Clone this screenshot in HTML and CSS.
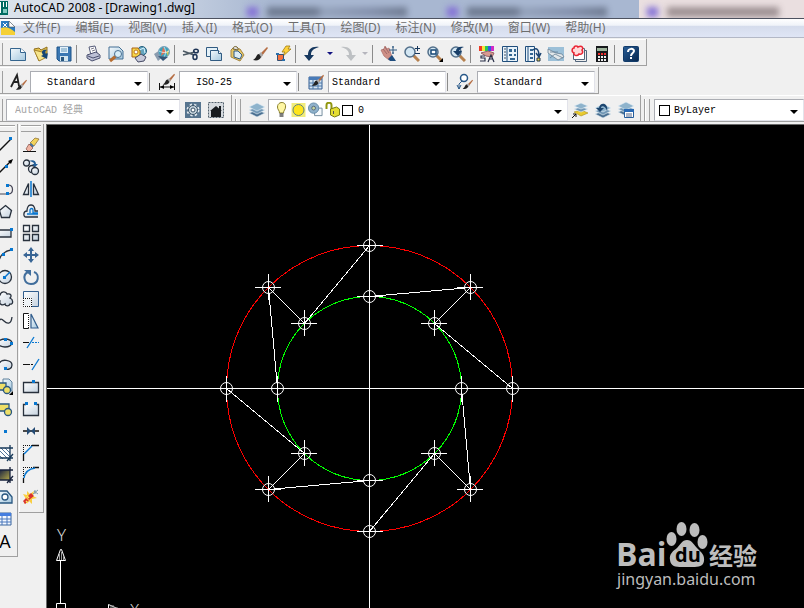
FILE: index.html
```html
<!DOCTYPE html>
<html lang="zh-CN">
<head>
<meta charset="utf-8">
<title>AutoCAD 2008 - [Drawing1.dwg]</title>
<link rel="stylesheet" href="styles.css">
</head>
<body>
<svg class="defs" aria-hidden="true">
  <defs>
    <linearGradient id="blue" x1="0" y1="0" x2="1" y2="1"><stop offset="0" stop-color="#f4f9fc"/><stop offset="1" stop-color="#a5c8df"/></linearGradient>
    <linearGradient id="pale" x1="0" y1="0" x2="1" y2="1"><stop offset="0" stop-color="#fff"/><stop offset="1" stop-color="#c5d2df"/></linearGradient>
    <linearGradient id="navy" x1="0" y1="0" x2="1" y2="1"><stop offset="0" stop-color="#285d96"/><stop offset="1" stop-color="#06264e"/></linearGradient>
    <linearGradient id="olive" x1="0" y1="0" x2="1" y2="1"><stop offset="0" stop-color="#17203f"/><stop offset="1" stop-color="#b5aa49"/></linearGradient>
    <symbol id="brush" viewBox="0 0 16 16"><path d="M15 1L8 8l2 2 6-8z" fill="#b56d43"/><path d="M9 6L6 9l3 3 2-3z" fill="#aaa"/><path d="M7 8c-3 0-2 4-6 6 4 1 7 0 8-3z" fill="#222"/></symbol>
    <symbol id="layers" viewBox="0 0 16 16"><g stroke="#e9f2f8" stroke-width=".6"><path d="M0 11l8-3 8 3-8 4z" fill="#496f91"/><path d="M0 8l8-3 8 3-8 4z" fill="#7197b5"/><path d="M0 5l8-4 8 4-8 4z" fill="#8eb3cc"/></g></symbol>
    <symbol id="lens" viewBox="0 0 16 16"><path d="M9 9l6 6" stroke="#b6814f" stroke-width="3"/><circle cx="6" cy="6" r="5" fill="#d4e7f3" stroke="#526f8a" stroke-width="1.5"/></symbol>
  </defs>
</svg>

<div class="app">
  <header class="titlebar">
    <svg class="app-icon" viewBox="0 0 9 16"><path d="M0 0h8v14H0z" fill="#006b62"/><path d="M0 1h1v11H0zM3 1h1v5H3zM6 1h1v5H6z" fill="#fff"/><path d="M3 8h4v4H3z" fill="#80c9c0"/></svg>
    <h1>AutoCAD 2008 - [Drawing1.dwg]</h1>
    <div class="backdrop" aria-hidden="true">
      <i class="tab"></i><i class="tab"></i><i class="tab front"></i>
    </div>
  </header>

  <nav class="menubar">
    <svg class="doc-icon" viewBox="0 0 16 16"><path d="M1 1h8l6 6v8H1z" fill="#2b7bc1"/><path d="M9 1v6h6z" fill="#fff" stroke="#555" stroke-width=".6"/><path d="M1 8c5-2 9 0 14 4v3H1z" fill="#f5d038"/><path d="M3 3l4 4M7 3L3 7" stroke="#fff"/></svg>
    <a href="#">文件(F)</a><a href="#">编辑(E)</a><a href="#">视图(V)</a><a href="#">插入(I)</a><a href="#">格式(O)</a><a href="#">工具(T)</a><a href="#">绘图(D)</a><a href="#">标注(N)</a><a href="#">修改(M)</a><a href="#">窗口(W)</a><a href="#">帮助(H)</a>
  </nav>

  <div class="row">
    <div class="toolbar standard">
      <button aria-label="新建"><svg viewBox="0 0 16 16"><path d="M.5 2.500h10l5 4v8H.5z" fill="url(#blue)" stroke="#35658e"/><path d="M10.500 2.500v4h5" fill="#fff" stroke="#35658e"/></svg></button>
      <button aria-label="打开"><svg viewBox="0 0 16 16"><path d="M1 3l5-1 2 2 6-3v6L6 15z" fill="#e7c34b" stroke="#907021"/><path d="M1 4l5 11 8-4-5-5z" fill="#f7e58b" stroke="#a4822e"/><path d="M14 4c-5-1-6 2-4 5l-2 1 6 3 1-6-2 1c-1-2-1-3 1-4z" fill="#154675"/></svg></button>
      <button aria-label="保存"><svg viewBox="0 0 16 16"><path d="M1 1h14v14H3l-2-2z" fill="#3b78b3" stroke="#1d5288"/><path d="M4 1h8v6H4z" fill="#e3f1fa"/><path d="M5 3h6M5 5h6" stroke="#6899bb"/><path d="M4 10h8v5H4z" fill="#d4e6ef"/><path d="M5 11h3v4H5z" fill="#28567f"/></svg></button>
      <span class="sep"></span>
      <button aria-label="打印"><svg viewBox="0 0 16 16"><path d="M4 1l6-1 2 7-6 2z" fill="#fff" stroke="#555b79"/><path d="M6 3l3-1M7 5l3-1" stroke="#778"/><path d="M2 9l9-3 4 3v3l-8 3-5-3z" fill="#bcc0d6" stroke="#4b506f"/><path d="M3 10l5 2 6-2" fill="none" stroke="#4b506f"/></svg></button>
      <button aria-label="打印预览"><svg viewBox="0 0 16 16"><path d="M1 1h10l4 4v8H1z" fill="url(#blue)" stroke="#426f94"/><path d="M8 10l-6 5" stroke="#b66d30" stroke-width="3"/><circle cx="10" cy="8" r="3.500" fill="#d7edf8" stroke="#4a6f8f"/></svg></button>
      <button aria-label="发布"><svg viewBox="0 0 16 16"><circle cx="11" cy="5" r="4.500" fill="#63a4be" stroke="#225d7c"/><path d="M8 4l5-2 1 5" fill="none" stroke="#d9f4ff"/><path d="M1 2h6l2 3v6H1z" fill="#f8d748" stroke="#aa6414"/><circle cx="5" cy="6" r="2" fill="#fff" stroke="#bd761e"/><path d="M4 12l6-4 5 3-2 4-6 1z" fill="#c7c9d9" stroke="#464b65"/></svg></button>
      <button aria-label="三维DWF"><svg viewBox="0 0 16 16"><path d="M0 8l6-4 5 5-7 6z" fill="#8a9bae"/><circle cx="10" cy="6" r="5.500" fill="#3ba1bb" stroke="#7ba3bd"/><path d="M9 1l3 5-5 4z" fill="#e37053"/><path d="M12 6l3-2-1 6z" fill="#d9c74d"/><path d="M10 1c2 3 2 7 0 10M5 5c4 2 7 2 10 0" fill="none" stroke="#e7f4f8" stroke-width=".8"/><path d="M4 10l5 5 5-4z" fill="#345578"/></svg></button>
      <span class="sep"></span>
      <button aria-label="剪切"><svg viewBox="0 0 16 16"><path d="M0 5l11 4M0 9l12-3" stroke="#4c5964" stroke-width="1.500"/><ellipse cx="13" cy="5" rx="2.300" ry="1.800" fill="none" stroke="#1e3455" stroke-width="1.500"/><ellipse cx="12" cy="11" rx="2" ry="2.500" fill="none" stroke="#1e3455" stroke-width="1.500"/></svg></button>
      <button aria-label="复制"><svg viewBox="0 0 16 16"><path d="M.5 1.500h11v9H.5z" fill="#e4f1f8" stroke="#315b82"/><path d="M4.500 4.500h8l3 3v7h-11z" fill="url(#blue)" stroke="#315b82"/><path d="M12.500 4.500v3h3" fill="#fff" stroke="#315b82"/></svg></button>
      <button aria-label="粘贴"><svg viewBox="0 0 16 16"><path d="M4 2l7 1 4 6-4 6-9-4V4z" fill="#e7c766" stroke="#a58540"/><path d="M4 3c0-4 6-3 5 1z" fill="#ddd" stroke="#76642f"/><path d="M5 5h4l4 4-2 4-6-2z" fill="#dcecf5" stroke="#315b82"/></svg></button>
      <button aria-label="特性匹配"><svg><use href="#brush"/></svg></button>
      <button aria-label="块编辑器"><svg viewBox="0 0 16 16"><path d="M11 0L7 6h3l-3 5 9-8h-3l2-3z" fill="#ffd33b" stroke="#a07c12" stroke-width=".8"/><path d="M2.500 8.500h6v6h-6z" fill="#f4713d" stroke="#334e72"/><path d="M1 7h3v2H1zM7 13h3v2H7z" fill="#286fab"/></svg></button>
      <span class="sep"></span>
      <button aria-label="放弃"><svg viewBox="0 0 16 16"><path d="M15 1C8 0 4 3 4 9H0l5 6 5-6H7c0-4 2-6 8-8z" fill="#16385f"/></svg></button>
      <button class="more" aria-label="放弃列表"><svg viewBox="0 0 6 4"><path d="M0 0h6L3 3z" fill="#111180"/></svg></button>
      <button aria-label="重做"><svg viewBox="0 0 16 16"><path d="M1 1c7-1 11 2 11 8h4l-5 6-5-6h3c0-4-2-6-8-8z" fill="#bdc0c3"/></svg></button>
      <button class="more redo" aria-label="重做列表"><svg viewBox="0 0 6 4"><path d="M0 0h6L3 3z" fill="#b5b5bd"/></svg></button>
      <span class="sep"></span>
      <button aria-label="实时平移"><svg viewBox="0 0 16 16"><path d="M0 4l3-1 1-3 2 3 2-1 3 9-3 3-5-4z" fill="#ce8f86" stroke="#b07570" stroke-width=".8"/><path d="M2 3l4 5M4 1l4 6" stroke="#7f4f52" stroke-width=".6"/><path d="M7 13l4-4 4 6H9z" fill="#1f4d7e"/><path d="M12 0v8M8 4h8M11 1h2M11 7h2" stroke="#315b82"/></svg></button>
      <button aria-label="实时缩放"><svg viewBox="0 0 16 16"><use href="#lens"/><path d="M13.500 0v5M11 2.500h5M11 7.500h5" stroke="#16365b"/></svg></button>
      <button aria-label="窗口缩放"><svg viewBox="0 0 16 16"><use href="#lens"/><path d="M4 4h5v4H4z" fill="#fff" stroke="#174876" stroke-width="1.500"/><path d="M16 12v4h-4z"/></svg></button>
      <button aria-label="缩放上一个"><svg viewBox="0 0 16 16"><use href="#lens"/><path d="M14 1C9 0 6 2 6 5H3l5 5 4-5H9c1-2 2-3 5-4z" fill="#173e69"/></svg></button>
      <span class="sep"></span>
      <button aria-label="特性"><svg viewBox="0 0 16 16"><path d="M0 0h3v5H0z" fill="#ed3a24"/><path d="M3 0h3v5H3z" fill="#f3e639"/><path d="M6 0h3v5H6z" fill="#27ca54"/><path d="M9 0h3v5H9z" fill="#315be0"/><path d="M12 0h3v5h-3z" fill="#d12ac7"/><path d="M2 7l7-2 6 2-2 4-6-1z" fill="#d89b91" stroke="#976265"/><path d="M6 10H2v2h4v3H1M9 16l3-7 3 7M10 13h4" fill="none" stroke="#292f48" stroke-width="1.200"/></svg></button>
      <button aria-label="设计中心"><svg viewBox="0 0 16 16"><path d="M.5.500h15v15H.5z" fill="#e9f3fa" stroke="#204e7c"/><path d="M5 1v14" stroke="#204e7c"/><path d="M2 3h2M2 6h2M2 9h2M2 12h2" stroke="#456"/><path d="M7 3h3v3H7zM12 3h2v3h-2zM7 8h3v2H7zM12 8h2v2h-2zM8 12h5v2H8z" fill="#346792"/></svg></button>
      <button aria-label="工具选项板"><svg viewBox="0 0 16 16"><path d="M.5.500h9v15h-9z" fill="#e9f3fa" stroke="#204e7c"/><path d="M3 1v14" stroke="#204e7c"/><path d="M5 3h3v2H5zM5 7h3v2H5zM5 11h3v2H5z" fill="#346792"/><path d="M8 4c4-3 6 0 6 6M11 7l3 4 2-4" fill="none" stroke="#1e4774" stroke-width="1.500"/><path d="M12 12h3v3h-3z" fill="#efd64e" stroke="#234"/></svg></button>
      <button aria-label="图纸集管理器"><svg viewBox="0 0 16 16"><path d="M0 1h16v14H0z" fill="#9cc0d8"/><path d="M0 3l8 4 6 1 2 3-6 3-10-7z" fill="#e3e8ea" stroke="#6a8295" stroke-width=".8"/><path d="M2 12l5-4 8 4M2 6h8" fill="none" stroke="#637f94" stroke-width=".8"/></svg></button>
      <button aria-label="标记集管理器"><svg viewBox="0 0 16 16"><path d="M4.500 4.500h11v11h-11z" fill="#eee" stroke="#53667c"/><path d="M2.500 2.500h11v11h-11z" fill="#fff" stroke="#53667c"/><path d="M3 2c0-3 4-2 4-1 4-2 6 1 4 3 2 3-1 5-3 4-2 3-6 1-5-1-3-1-2-5 0-5z" fill="#ffd9d9" stroke="#ea2534" stroke-width="1.500"/></svg></button>
      <button aria-label="快速计算器"><svg viewBox="0 0 16 16"><path d="M2 0h12v16H2z" fill="#17191c"/><path d="M3 2h10v3H3z" fill="#9db49c"/><path d="M4 7h2v2H4zM7 7h2v2H7zM10 7h2v2h-2z" fill="#ef3030"/><path d="M4 10h2v2H4zM7 10h2v2H7zM10 10h2v2h-2zM4 13h2v2H4zM7 13h2v2H7zM10 13h2v2h-2z" fill="#eee"/></svg></button>
      <span class="sep"></span>
      <button aria-label="帮助"><svg viewBox="0 0 16 16"><rect x=".5" y=".5" width="15" height="15" rx="1" fill="url(#navy)" stroke="#113b6a"/><path d="M5 6c0-4 6-4 6-1 0 2-3 2-3 5M8 11v2" fill="none" stroke="#fff" stroke-width="2"/></svg></button>
    </div>
  </div>

  <div class="row">
    <div class="toolbar styles">
      <button aria-label="文字样式"><svg viewBox="0 0 16 16"><path d="M1 13L7 1l2 11M3 8h6" fill="none" stroke="#222" stroke-width="1.800"/><use href="#brush" x="5" y="5" width="12" height="12"/></svg></button>
      <label class="combo style"><select aria-label="文字样式"><option>Standard</option></select></label>
      <span class="sep"></span>
      <button aria-label="标注样式"><svg viewBox="0 0 16 16"><use href="#brush" x="3" y="-1" width="13" height="13"/><path d="M.5 9v7M15.500 9v7M1 13h14" stroke="#111"/><path d="M1 13l4-2v4zM15 13l-4-2v4z"/></svg></button>
      <label class="combo style"><select aria-label="标注样式"><option>ISO-25</option></select></label>
      <span class="sep"></span>
      <button aria-label="表格样式"><svg viewBox="0 0 16 16"><path d="M1 3h13v12H1z" fill="#d3e3f1" stroke="#325d92"/><path d="M1 3h13v3H1z" fill="#497bb8"/><path d="M1 9h13M1 12h13M5 6v9M10 6v9" stroke="#4d79a9"/><use href="#brush" x="3" y="0" width="13" height="13"/></svg></button>
      <label class="combo style near"><select aria-label="表格样式"><option>Standard</option></select></label>
      <span class="sep"></span>
      <button aria-label="多重引线样式"><svg viewBox="0 0 16 16"><circle cx="7" cy="4" r="3.500" fill="#fff" stroke="#285888" stroke-width="1.500"/><path d="M5 7l-3 3v5M0 11l2 4 2-4" fill="none" stroke="#285888"/><use href="#brush" x="5" y="5" width="11" height="11"/></svg></button>
      <label class="combo style"><select aria-label="多重引线样式"><option>Standard</option></select></label>
    </div>
  </div>

  <div class="row">
    <div class="toolbar workspace">
      <label class="combo muted"><select aria-label="工作空间"><option>AutoCAD 经典</option></select></label>
      <button aria-label="工作空间设置"><svg viewBox="0 0 16 16"><path d="M0 0h16v16H0z" fill="#57758f"/><circle cx="8" cy="8" r="5" fill="#bccbd6" stroke="#e5ebef" stroke-width="3" stroke-dasharray="2 2"/><circle cx="8" cy="8" r="4.500" fill="#c4d2dc" stroke="#344e63"/><circle cx="8" cy="8" r="2" fill="#fff" stroke="#344e63"/></svg></button>
      <button aria-label="我的工作空间"><svg viewBox="0 0 16 16"><path d="M.5.500h15v15H.5z" fill="#d5dadf" stroke="#52606c" stroke-dasharray="2 1"/><path d="M2 9l6-5 6 5h-1v6H3V9z" fill="#171b1f"/><path d="M11 4h2v4h-2z" fill="#171b1f"/></svg></button>
    </div>
    <div class="toolbar layer-bar">
      <span class="grip"></span>
      <button aria-label="图层特性管理器"><svg><use href="#layers"/></svg></button>
      <label class="combo layer">
        <svg viewBox="0 0 12 16"><path d="M2 5c0-6 9-6 8 0 0 3-2 3-2 6H4c0-3-2-3-2-6z" fill="#fff7a4" stroke="#8a812c"/><path d="M4 12h4M4 14h4" stroke="#555" stroke-width="1.500"/></svg>
        <svg viewBox="0 0 14 16"><path d="M0 1h14v14H0z" fill="#f1ec7a"/><circle cx="7" cy="8" r="5.500" fill="#ffe51c" stroke="#5e8385"/></svg>
        <svg viewBox="0 0 16 16"><path d="M7 6h8v8H7z" fill="#f5f9fc" stroke="#718a9c"/><circle cx="6" cy="6" r="5.500" fill="#8fb1ca" stroke="#638ba9"/><circle cx="6" cy="6" r="2" fill="#c9d8a2" stroke="#567"/></svg>
        <svg viewBox="0 0 14 16"><path d="M1 7V3c0-3 5-3 5 0v5" fill="none" stroke="#919710" stroke-width="2"/><path d="M5 7l6-2 3 2v6l-5 2-4-2z" fill="#e4dd31" stroke="#777b13"/><path d="M8 9v3" stroke="#555"/></svg>
        <i class="swatch"></i>
        <select aria-label="图层"><option>0</option></select>
      </label>
      <button aria-label="置为当前图层"><svg viewBox="0 0 16 16"><path d="M2 10l7-2 7 3-7 3z" fill="#e9ca2d" stroke="#a88d1c" stroke-width=".6"/><path d="M2 7l7-2 7 2-7 3z" fill="#7197b5" stroke="#e9f2f8" stroke-width=".6"/><path d="M2 4l7-3 7 3-7 3z" fill="#8eb3cc" stroke="#e9f2f8" stroke-width=".6"/><path d="M0 16l4-4M1 12h3v3" fill="none" stroke="#111"/></svg></button>
      <button aria-label="上一个图层"><svg viewBox="0 0 16 16"><use href="#layers" y="1"/><path d="M12 9c2-8-7-10-8-3H1l4 4 4-4H6c0-3 5-2 6 3z" fill="#1c456f"/></svg></button>
      <button aria-label="图层状态管理器"><svg viewBox="0 0 16 16"><use href="#layers" y="-1"/><path d="M6.500 7.500h9v8h-9z" fill="#fff" stroke="#255d9c"/><path d="M6 7h10v3H6z" fill="#2869b4"/><path d="M8 12h6M8 14h6" stroke="#568"/></svg></button>
    </div>
    <div class="toolbar props-bar">
      <span class="grip"></span>
      <label class="combo color"><i class="swatch"></i><select aria-label="颜色控制"><option>ByLayer</option></select></label>
    </div>
  </div>

  <main class="work">
    <aside class="palette draw">
      <span class="grip flat"></span>
      <button aria-label="直线"><svg viewBox="0 0 16 16"><path d="M0 16L14 2" stroke="#111" stroke-width="1.300"/><path d="M12 0h3v3h-3z" class="node"/></svg></button>
      <button aria-label="构造线"><svg viewBox="0 0 16 16"><path d="M0 16L14 2" stroke="#111" stroke-width="1.300"/><path d="M16 0l-5 2 3 3z"/><path d="M8 6h3v3H8z" class="node"/></svg></button>
      <button aria-label="多段线"><svg viewBox="0 0 16 16"><path d="M1 13h9M11 4c6 0 6 9 0 9" fill="none" stroke="#445" stroke-width="1.200"/><path d="M9 3h3v3H9zM9 11h3v3H9z" class="node"/></svg></button>
      <button aria-label="正多边形"><svg viewBox="0 0 16 16"><path d="M8.500 2.500l6 5-2 7h-8l-2-7z" class="shape"/></svg></button>
      <button aria-label="矩形"><svg viewBox="0 0 16 16"><path d="M0 5h14v7H0z" class="shape"/><path d="M13 3h3v3h-3z" class="node"/></svg></button>
      <button aria-label="圆弧"><svg viewBox="0 0 16 16"><path d="M2 14C3 8 8 4 14 3" class="line"/><path d="M5 6h3v3H5zM13 1h3v3h-3z" class="node"/></svg></button>
      <button aria-label="圆"><svg viewBox="0 0 16 16"><circle cx="8" cy="8" r="6.500" class="shape"/><path d="M8 8l5-5" stroke="#0774cf" stroke-width="1.500"/><path d="M6 7h3v3H6z" class="node"/></svg></button>
      <button aria-label="修订云线"><svg viewBox="0 0 16 16"><path d="M3 4c1-4 6-4 7-1 4-1 5 2 3 4 4 2 3 7 0 6-1 3-5 2-5 0-3 2-6 0-5-3-4-1-3-6 0-6z" class="shape"/></svg></button>
      <button aria-label="样条曲线"><svg viewBox="0 0 16 16"><path d="M1 11c2-7 4-5 6-3 3 3 7 4 8-4" class="line"/></svg></button>
      <button aria-label="椭圆"><svg viewBox="0 0 16 16"><ellipse cx="8" cy="8" rx="7" ry="4" class="shape"/><path d="M7 3h3v3H7zM13 7h3v3h-3z" class="node"/></svg></button>
      <button aria-label="椭圆弧"><svg viewBox="0 0 16 16"><path d="M2 7c2-6 13-4 13 1 0 4-4 5-7 4" class="shape"/><path d="M7 10h3v3H7z" class="node"/></svg></button>
      <button aria-label="插入块"><svg viewBox="0 0 16 16"><path d="M6 0h6l3 3v9H6z" fill="url(#blue)" stroke="#60829d"/><path d="M1 4h8v7H1z" class="block"/><circle cx="10" cy="11" r="3.500" class="block"/><path d="M16 12v4h-4z"/></svg></button>
      <button aria-label="创建块"><svg viewBox="0 0 16 16"><path d="M2 3h10v7H2z" class="block"/><circle cx="11" cy="11" r="3.500" class="block"/></svg></button>
      <button aria-label="点"><svg viewBox="0 0 16 16"><path d="M7 7h3v3H7z" class="node"/></svg></button>
      <button aria-label="图案填充"><svg viewBox="0 0 16 16"><path d="M2 3h11v10H2z" fill="#fff"/><path d="M1 4l9 9M4 3l9 9M8 3l5 5M1 9l5 5" stroke="#52749a"/><path d="M0 3h16M0 13h16M2 0v16M13 0v16M10 16l6-7" stroke="#173959" stroke-width="1.300"/></svg></button>
      <button aria-label="渐变色"><svg viewBox="0 0 16 16"><path d="M2 3h11v10H2z" fill="url(#olive)"/><path d="M0 3h16M0 13h16M2 0v16M13 0v16M10 16l6-7" stroke="#17223c" stroke-width="1.300"/></svg></button>
      <button aria-label="面域"><svg viewBox="0 0 16 16"><path d="M1 2h9l5 6v6H1z" fill="url(#blue)" stroke="#295780" stroke-width="1.300"/><circle cx="8" cy="8" r="3" fill="#fff" stroke="#295780" stroke-width="1.300"/></svg></button>
      <button aria-label="表格"><svg viewBox="0 0 16 16"><path d="M1 2h13v12H1z" fill="#f4f8ff" stroke="#39649d"/><path d="M1 2h13v3H1z" fill="#457ee0"/><path d="M1 8h13M1 11h13M5 5v9M10 5v9" stroke="#4977bb"/></svg></button>
      <button class="text-tool" aria-label="多行文字">A</button>
    </aside>

    <aside class="palette modify">
      <span class="grip flat"></span>
      <button aria-label="删除"><svg viewBox="0 0 16 16"><path d="M12 1l4 1-5 7-4-3z" fill="#f2d35d" stroke="#85672b" stroke-width=".7"/><path d="M8 6l3 3-2 2-3-3z" fill="#4672a2"/><path d="M6 7l4 4-4 4-3-3z" fill="#efb2a1" stroke="#854f45" stroke-width=".7"/><path d="M0 14.500h13" stroke="#111"/></svg></button>
      <button aria-label="复制对象"><svg viewBox="0 0 16 16"><circle cx="3.500" cy="4" r="3" class="shape"/><circle cx="9" cy="10" r="3.500" class="shape"/><circle cx="12" cy="12" r="3.500" class="shape"/><path d="M6 2c4-2 7 0 7 3h2l-3 3-3-3h2c0-2-2-2-5-3z" fill="#245f98"/></svg></button>
      <button aria-label="镜像"><svg viewBox="0 0 16 16"><path d="M5.500 2.500v11h-5zM10.500 2.500v11h5z" class="shape"/><path d="M8 0v16" stroke="#0877d0" stroke-width="1.500"/></svg></button>
      <button aria-label="偏移"><svg viewBox="0 0 16 16"><path d="M15 14H3c-3 0-3-6 1-6 0 0 0-6 4-6s4 6 4 6h3" class="shape"/><path d="M15 11H4M7 10V7c0-2 3-2 3 0v3h5" fill="none" stroke="#0877d0" stroke-width="1.300"/></svg></button>
      <button aria-label="阵列"><svg viewBox="0 0 16 16"><path d="M.5.500h6v6h-6zM9.500.500h6v6h-6zM.5 9.500h6v6h-6zM9.500 9.500h6v6h-6z" class="shape"/></svg></button>
      <button aria-label="移动"><svg viewBox="0 0 16 16"><path d="M8 0l3 4H9v3h3V5l4 3-4 3V9H9v3h2l-3 4-3-4h2V9H4v2L0 8l4-3v2h3V4H5z" fill="#386595"/></svg></button>
      <button aria-label="旋转"><svg viewBox="0 0 16 16"><path d="M5 3c-6 3-4 12 3 12 8 0 9-10 3-12" fill="none" stroke="#416e9c" stroke-width="2"/><path d="M1 1h7v6z" fill="#416e9c"/></svg></button>
      <button aria-label="缩放"><svg viewBox="0 0 16 16"><path d="M.5.500h15v15H.5z" fill="url(#pale)" stroke="#315d8d"/><path d="M.5 7.500h8v8h-8z" fill="#eef2f5" stroke="#fff"/><path d="M0 7.500h8.500V16M.5 7v8.500H8" fill="none" stroke="#111" stroke-dasharray="1 1"/></svg></button>
      <button aria-label="拉伸"><svg viewBox="0 0 16 16"><path d="M.5.500h5v15h-5z" fill="#fff" stroke="#111"/><path d="M8 1l7 14H8z" fill="url(#blue)" stroke="#315d8d" stroke-width="1.200"/><path d="M5.500 1v14" stroke="#fff" stroke-dasharray="1 1"/></svg></button>
      <button aria-label="修剪"><svg viewBox="0 0 16 16"><path d="M0 7.500h6" stroke="#111"/><path d="M4 13L11 2" stroke="#0877d0" stroke-width="1.300"/><path d="M9 7.500h7" stroke="#0877d0" stroke-dasharray="2 1"/></svg></button>
      <button aria-label="延伸"><svg viewBox="0 0 16 16"><path d="M0 7.500h5" stroke="#111"/><path d="M5 7.500h6" stroke="#111" stroke-dasharray="2 1"/><path d="M9 13l7-11" stroke="#0877d0" stroke-width="1.300"/></svg></button>
      <button aria-label="打断于点"><svg viewBox="0 0 16 16"><path d="M.5 3.500h15v10H.5z" class="shape"/><path d="M9 1h3v3H9z" class="node"/></svg></button>
      <button aria-label="打断"><svg viewBox="0 0 16 16"><path d="M3 3.500H.5v11h15v-11H13" class="shape"/><path d="M2 1h3v3H2zM11 1h3v3h-3z" class="node"/></svg></button>
      <button aria-label="合并"><svg viewBox="0 0 16 16"><path d="M0 8h16" stroke="#111" stroke-width="1.500"/><path d="M4 4l4 4-4 4zM12 4L8 8l4 4z" fill="#244b74"/></svg></button>
      <button aria-label="倒角"><svg viewBox="0 0 16 16"><path d="M9 .5h7M.5 9v7" stroke="#111" stroke-width="1.300"/><path d="M0 .5h9M.5 0v9" stroke="#111" stroke-dasharray="1 1"/><path d="M1 9l8-8" stroke="#0877d0" stroke-width="1.500"/></svg></button>
      <button aria-label="圆角"><svg viewBox="0 0 16 16"><path d="M10 .5h6M.5 11v5" stroke="#111" stroke-width="1.300"/><path d="M0 .5h9M.5 0v9" stroke="#111" stroke-dasharray="1 1"/><path d="M1 11C2 5 5 2 12 1" fill="none" stroke="#0877d0" stroke-width="1.500"/></svg></button>
      <button aria-label="分解"><svg viewBox="0 0 16 16"><path d="M0 5l4 1 0-4 3 3 4-3-1 5 4 2-5 1 0 5-3-3-5 3 2-5z" fill="#f9ce42"/><path d="M2 15l-2-3 3-3 3 3zM6 11L4 8l4-4 3 3z" fill="#d8322f"/><path d="M4 7l2 2M3 12l2 2" stroke="#ffe85a" stroke-width="1.500"/><path d="M10 5l5-4M12 1v4M11 2l4 3" stroke="#8199a8"/></svg></button>
    </aside>

    <section class="canvas">
      <svg class="drawing" viewBox="47 125 757 483" preserveAspectRatio="xMinYMin slice">
        <g fill="none" shape-rendering="crispEdges">
          <circle cx="369.500" cy="388.500" r="143" stroke="#f00"/>
          <circle cx="369.500" cy="388.500" r="92" stroke="#0f0"/>
          <g stroke="#fff">
            <path d="M369.500 125v483M47 388.500h757"/>
            <path d="M369.500 245.500l-65 78-36-36 9 101M226.500 388.500l78 65-36 36 101-9M369.500 531.500l65-78 36 36-9-101M512.500 388.500l-78-65 36-36-101 9"/>
          </g>
        </g>
        <g class="points">
          <circle cx="369.500" cy="245.500" r="6"/><circle cx="369.500" cy="296.500" r="6"/><circle cx="369.500" cy="480.500" r="6"/><circle cx="369.500" cy="531.500" r="6"/><circle cx="226.500" cy="388.500" r="6"/><circle cx="277.500" cy="388.500" r="6"/><circle cx="461.500" cy="388.500" r="6"/><circle cx="512.500" cy="388.500" r="6"/><circle cx="268.500" cy="287.500" r="6"/><circle cx="304.500" cy="323.500" r="6"/><circle cx="470.500" cy="287.500" r="6"/><circle cx="434.500" cy="323.500" r="6"/><circle cx="268.500" cy="489.500" r="6"/><circle cx="304.500" cy="453.500" r="6"/><circle cx="470.500" cy="489.500" r="6"/><circle cx="434.500" cy="453.500" r="6"/>
          <path d="M357 245.500h26M357 296.500h26M357 480.500h26M357 531.500h26M226.500 376v26M277.500 376v26M461.500 376v26M512.500 376v26M255 287.500h26M268.500 274v26M291 323.500h26M304.500 310v26M457 287.500h26M470.500 274v26M421 323.500h26M434.500 310v26M255 489.500h26M268.500 476v26M291 453.500h26M304.500 440v26M457 489.500h26M470.500 476v26M421 453.500h26M434.500 440v26"/>
        </g>
        <g fill="none" stroke="#fff">
          <path d="M60.500 560v43M56.500 603.500h9v9h-9zM56.500 560.500h9l-4-11h-1zM108.500 604.500v9l11-4z"/>
          <path d="M59.500 560v-6M61.500 560v-8M63.500 560v-4M110 606h4M110 608h8" stroke="#999"/>
        </g>
        <text class="axis" x="57" y="541">Y</text>
        <text class="axis" x="130" y="616">X</text>
      </svg>
      <svg class="watermark" viewBox="612 518 152 72">
        <text class="logo" x="616" y="566">Bai</text>
        <g fill="#bdbdbd">
          <ellipse cx="671.500" cy="539" rx="5" ry="7"/><ellipse cx="681.500" cy="529" rx="5" ry="7"/><ellipse cx="694.500" cy="530" rx="5" ry="7"/><ellipse cx="702.500" cy="542" rx="5" ry="7"/>
          <path d="M687 540c-5 0-7 5-10 8-4 3-8 6-7 12 1 8 8 7 17 7s16 1 17-6c1-6-3-9-7-13-3-3-5-8-10-8z"/>
        </g>
        <text class="du" x="675" y="562">du</text>
        <text class="cn" x="709" y="565">经验</text>
        <text class="site" x="617" y="585">jingyan.baidu.com</text>
      </svg>
    </section>
  </main>
</div>
</body>
</html>
```

FILE: styles.css
```css
* { box-sizing: border-box; }

body {
  margin: 0;
  background: #f0f0f0;
  font: 12px/16px "Noto Sans", "Noto Sans CJK SC", sans-serif;
  overflow: hidden;
}

.defs { position: absolute; width: 0; height: 0; }

.app { display: flex; flex-direction: column; height: 100vh; }

/* Title bar */
.titlebar {
  display: flex;
  align-items: center;
  height: 19px;
  border-bottom: 1px solid #4d5260;
  background: linear-gradient(90deg, #dce3ec 0, #cbd5e4 160px, #a8b7d1 270px, #a8b7d1 100%);
  overflow: hidden;
}
.app-icon { width: 9px; height: 16px; }
.titlebar h1 { margin: 0 0 2px 5px; font: inherit; color: #000; white-space: nowrap; }
.backdrop { display: flex; flex: 1; height: 18px; margin-left: 44px; }
.tab { position: relative; flex: 0 0 200px; }
.tab::before,
.tab::after { content: ""; position: absolute; top: 7px; height: 10px; filter: blur(3px); }
.tab::before { left: 8px; width: 11px; background: #8471d6; }
.tab::after { left: 28px; width: 140px; background: linear-gradient(90deg, #5c677d 35%, #8f9db6 40%, #7884a0 75%, #5c677d); opacity: .75; }
.tab.front { flex: 1; background: #eadfe0; }
.tab.front::after { left: 28px; width: 112px; background: #85777a; }

/* Menu bar */
.menubar {
  display: flex;
  align-items: center;
  gap: 15px;
  height: 19px;
  background: linear-gradient(#fff 0, #f0f3f9 35%, #d5dcec 40%, #dfe5f5 100%);
  border-bottom: 1px solid #b3b8c6;
}
.doc-icon { width: 16px; height: 16px; margin-right: -8px; }
.menubar a { color: #6d6d6d; text-decoration: none; white-space: nowrap; }

/* Toolbars */
.row { display: flex; height: 27px; margin-top: 1px; }
.toolbar {
  display: flex;
  align-items: center;
  padding: 4px 4px 0 3px;
  border: 1px solid #a0a0a0;
  border-width: 0 1px 1px 0;
  box-shadow: inset 0 1px #fff;
}
.row > .toolbar:first-child::before {
  content: "";
  width: 1px;
  height: 22px;
  margin-left: -1px;
  margin-right: 3px;
  background: #a0a0a0;
}
button {
  display: flex;
  align-items: center;
  justify-content: center;
  flex: none;
  width: 23px;
  height: 22px;
  padding: 0;
  border: 0;
  background: none;
}
button svg { width: 16px; height: 16px; overflow: visible; }
.toolbar button.more { width: 13px; }
.toolbar button.redo { width: 12px; }
.more svg { width: 6px; height: 4px; }
.sep { flex: none; width: 6px; height: 18px; border-left: 1px solid #8b8b8b; margin-left: 1px; margin-right: -1px; }

.combo {
  position: relative;
  display: flex;
  align-items: center;
  gap: 1px;
  height: 22px;
  background: #fff;
  border: 1px solid #abadb3;
  border-color: #abadb3 #e2e3ea #e2e3ea #abadb3;
}
.combo::after {
  content: "";
  position: absolute;
  right: 5px;
  top: 10px;
  border: 4px solid transparent;
  border-top-color: #000;
  border-bottom: 0;
  pointer-events: none;
}
.combo select {
  flex: 1;
  min-width: 0;
  height: 20px;
  padding: 1px 16px 0 3px;
  border: 0;
  background: none;
  color: #000;
  font: 10px/16px "Liberation Mono", "Noto Sans CJK SC", monospace;
  appearance: none;
}
.styles { padding-right: 3px; }
.styles .sep { width: 7px; }
.style { width: 118px; margin-left: 1px; }
.style select { padding-left: 16px; }
.style.near select { padding-left: 3px; }
.muted { width: 174px; margin-right: 1px; }
.muted select { color: #a5a5a5; padding-left: 8px; }
.workspace { padding-right: 4px; }
.layer-bar { padding-right: 3px; }
.props-bar { flex: 1; border-right: 0; padding-right: 0; }
.layer { width: 300px; padding-left: 5px; gap: 2px; }
.layer svg { flex: none; width: 15px; height: 16px; }
.color { flex: 1; padding-left: 4px; }
.swatch { flex: none; width: 11px; height: 11px; border: 1px solid #000; background: #fff; }

.grip {
  flex: none;
  width: 6px;
  height: 22px;
  margin-right: 4px;
  border: solid #a0a0a0;
  border-width: 0 1px;
  box-shadow: inset 1px 0 #fff;
}

/* Work area */
.work { display: flex; flex: 1; align-items: flex-start; min-height: 0; padding-top: 2px; overflow: hidden; }
.palette {
  display: flex;
  flex-direction: column;
  align-items: center;
  flex: none;
  width: 25px;
  padding-bottom: 4px;
  border: solid #a0a0a0;
  border-width: 0 1px 1px 0;
  box-shadow: inset 1px 0 #fff;
}
.draw { margin-left: -7px; margin-right: 1px; }
.modify { margin-right: 2px; }
.grip.flat {
  width: 20px;
  height: 7px;
  margin: 1px 0 2px;
  border-width: 1px 0;
  box-shadow: inset 0 1px #fff;
}
.node { fill: #0877d0; }
.line { fill: none; stroke: #28313d; stroke-width: 1.3; }
.shape { fill: url(#pale); stroke: #28313d; stroke-width: 1.3; }
.block { fill: #eedf67; stroke: #285780; stroke-width: 1.3; }
.text-tool { font: 18px/18px "Open Sans", sans-serif; color: #000; }

.canvas {
  position: relative;
  flex: 1;
  align-self: stretch;
  min-width: 0;
  background: #000;
  border: solid #696969;
  border-width: 1px 0 0 1px;
  overflow: hidden;
}
.drawing { display: block; width: 100%; height: 100%; }
.points { fill: none; stroke: #fff; }
.points path { shape-rendering: crispEdges; }
.axis { fill: #e6e6e6; font: 300 17px "Open Sans", sans-serif; }

.watermark { position: absolute; right: 40px; bottom: 18px; width: 152px; height: 72px; }
.watermark text { fill: #bdbdbd; }
.watermark .logo { font: bold 32px "Open Sans", sans-serif; }
.watermark .du { fill: #000; font: bold 20px "Open Sans", sans-serif; }
.watermark .cn { font: bold 24px "Noto Sans CJK SC", sans-serif; }
.watermark .site { font: 16px "Noto Sans", sans-serif; }
```
